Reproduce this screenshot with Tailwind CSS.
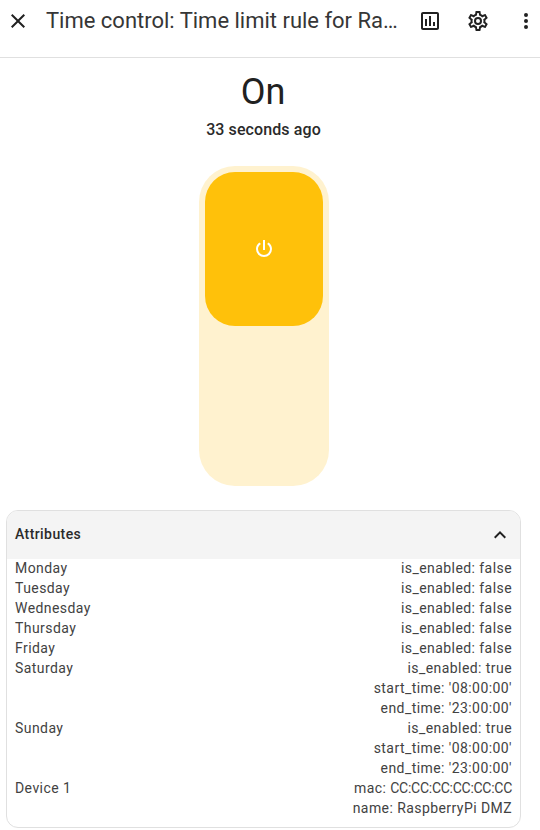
<!DOCTYPE html>
<html lang="en"><head><meta charset="utf-8"><title>Time control</title>
<script src="https://cdn.jsdelivr.net/npm/@tailwindcss/browser@4"></script></head>
<body class="bg-white font-['Roboto',sans-serif] text-[#212121] overflow-hidden">
<div class="w-[540px] h-[830px] flex flex-col overflow-hidden">
<header class="h-[58px] shrink-0 border-b border-[#e0e0e0] flex items-start pt-[9px] pl-[6px]">
<svg class="size-6 shrink-0" viewBox="0 0 24 24" fill="currentColor"><path d="M19,6.41L17.59,5L12,10.59L6.41,5L5,6.41L10.59,12L5,17.59L6.41,19L12,13.41L17.59,19L19,17.59L13.41,12L19,6.41Z"/></svg>
<h1 class="ml-4 w-[352px] shrink-0 whitespace-nowrap text-[22px] leading-[24px] tracking-[-0.01px] text-[#363636]">Time control: Time limit rule for Ra…</h1>
<svg class="ml-5 size-6 shrink-0" viewBox="0 0 24 24" fill="currentColor"><path d="M9 17H7V10H9V17M13 17H11V7H13V17M17 17H15V13H17V17M19 19H5V5H19V19.1M19 3H5C3.9 3 3 3.9 3 5V19C3 20.1 3.9 21 5 21H19C20.1 21 21 20.1 21 19V5C21 3.9 20.1 3 19 3Z"/></svg>
<svg class="ml-6 size-6 shrink-0" viewBox="0 0 24 24" fill="currentColor"><path d="M12,8A4,4 0 0,1 16,12A4,4 0 0,1 12,16A4,4 0 0,1 8,12A4,4 0 0,1 12,8M12,10A2,2 0 0,0 10,12A2,2 0 0,0 12,14A2,2 0 0,0 14,12A2,2 0 0,0 12,10M10,22C9.75,22 9.54,21.82 9.5,21.58L9.13,18.93C8.5,18.68 7.96,18.34 7.44,17.94L4.95,18.95C4.73,19.03 4.46,18.95 4.34,18.73L2.34,15.27C2.21,15.05 2.27,14.78 2.46,14.63L4.57,12.97L4.5,12L4.57,11L2.46,9.37C2.27,9.22 2.21,8.95 2.34,8.73L4.34,5.27C4.46,5.05 4.73,4.96 4.95,5.05L7.44,6.05C7.96,5.66 8.5,5.32 9.13,5.07L9.5,2.42C9.54,2.18 9.75,2 10,2H14C14.25,2 14.46,2.18 14.5,2.42L14.87,5.07C15.5,5.32 16.04,5.66 16.56,6.05L19.05,5.05C19.27,4.96 19.54,5.05 19.66,5.27L21.66,8.73C21.79,8.95 21.73,9.22 21.54,9.37L19.43,11L19.5,12L19.43,13L21.54,14.63C21.73,14.78 21.79,15.05 21.66,15.27L19.66,18.73C19.54,18.95 19.27,19.04 19.05,18.95L16.56,17.95C16.04,18.34 15.5,18.68 14.87,18.93L14.5,21.58C14.46,21.82 14.25,22 14,22H10M11.25,4L10.88,6.61C9.68,6.86 8.62,7.5 7.85,8.39L5.44,7.35L4.69,8.65L6.8,10.2C6.4,11.37 6.4,12.64 6.8,13.8L4.68,15.36L5.43,16.66L7.86,15.62C8.63,16.5 9.68,17.14 10.87,17.38L11.24,20H12.76L13.13,17.39C14.32,17.14 15.37,16.5 16.14,15.62L18.57,16.66L19.32,15.36L17.2,13.81C17.6,12.64 17.6,11.37 17.2,10.2L19.31,8.65L18.56,7.35L16.15,8.39C15.38,7.5 14.32,6.86 13.12,6.62L12.75,4H11.25Z"/></svg>
<svg class="ml-6 size-6 shrink-0" viewBox="0 0 24 24" fill="currentColor"><path d="M12,16A2,2 0 0,1 14,18A2,2 0 0,1 12,20A2,2 0 0,1 10,18A2,2 0 0,1 12,16M12,10A2,2 0 0,1 14,12A2,2 0 0,1 12,14A2,2 0 0,1 10,12A2,2 0 0,1 12,10M12,4A2,2 0 0,1 14,6A2,2 0 0,1 12,8A2,2 0 0,1 10,6A2,2 0 0,1 12,4Z"/></svg>
</header>
<main class="w-[528px] flex flex-col items-center">
<p class="mt-[12px] pr-[2px] text-[36px] leading-[44px]">On</p>
<p class="mt-[4px] pr-px text-[16px] leading-[24px] font-medium tracking-[0.1px] text-[#2a2a2a]">33 seconds ago</p>
<div class="mt-[24px] h-[320px] w-[130px] rounded-[36px] bg-[#fff2cf] p-[6px]">
<div class="h-[154px] rounded-[30px] bg-[#ffc10a] text-white flex items-center justify-center"><svg class="size-6" viewBox="0 0 24 24" fill="currentColor"><path d="M16.56,5.44L15.11,6.89C16.84,7.94 18,9.83 18,12A6,6 0 0,1 12,18A6,6 0 0,1 6,12C6,9.83 7.16,7.94 8.88,6.88L7.44,5.44C5.36,6.88 4,9.28 4,12A8,8 0 0,0 12,20A8,8 0 0,0 20,12C20,9.28 18.64,6.88 16.56,5.44M13,3H11V13H13"/></svg></div>
</div>
</main>
<section class="mt-[24px] ml-[6px] h-[318px] w-[515px] shrink-0 overflow-hidden rounded-[12px] border border-[#e0e0e0]">
<div class="flex h-[48px] items-center justify-between bg-[#f4f4f4] px-2 text-[14px] font-medium tracking-[0.42px]"><span class="pb-[2px] text-[#2a2a2a]">Attributes</span><svg class="size-6" viewBox="0 0 24 24" fill="currentColor"><path d="M7.41,15.41L12,10.83L16.59,15.41L18,14L12,8L6,14L7.41,15.41Z"/></svg></div>
<dl class="-mt-px grid grid-cols-[auto_1fr] px-2 text-[14px] leading-[20px] tracking-[0.43px] text-[#424242] [&>dd]:text-right">
<dt>Monday</dt><dd>is_enabled: false</dd>
<dt>Tuesday</dt><dd>is_enabled: false</dd>
<dt>Wednesday</dt><dd>is_enabled: false</dd>
<dt>Thursday</dt><dd>is_enabled: false</dd>
<dt>Friday</dt><dd>is_enabled: false</dd>
<dt>Saturday</dt><dd>is_enabled: true<br>start_time: '08:00:00'<br>end_time: '23:00:00'</dd>
<dt>Sunday</dt><dd>is_enabled: true<br>start_time: '08:00:00'<br>end_time: '23:00:00'</dd>
<dt>Device 1</dt><dd>mac: <span class="tracking-[-0.27px]">CC:CC:CC:CC:CC:CC</span><br>name: RaspberryPi DMZ</dd>
</dl>
</section>
</div>
</body></html>
